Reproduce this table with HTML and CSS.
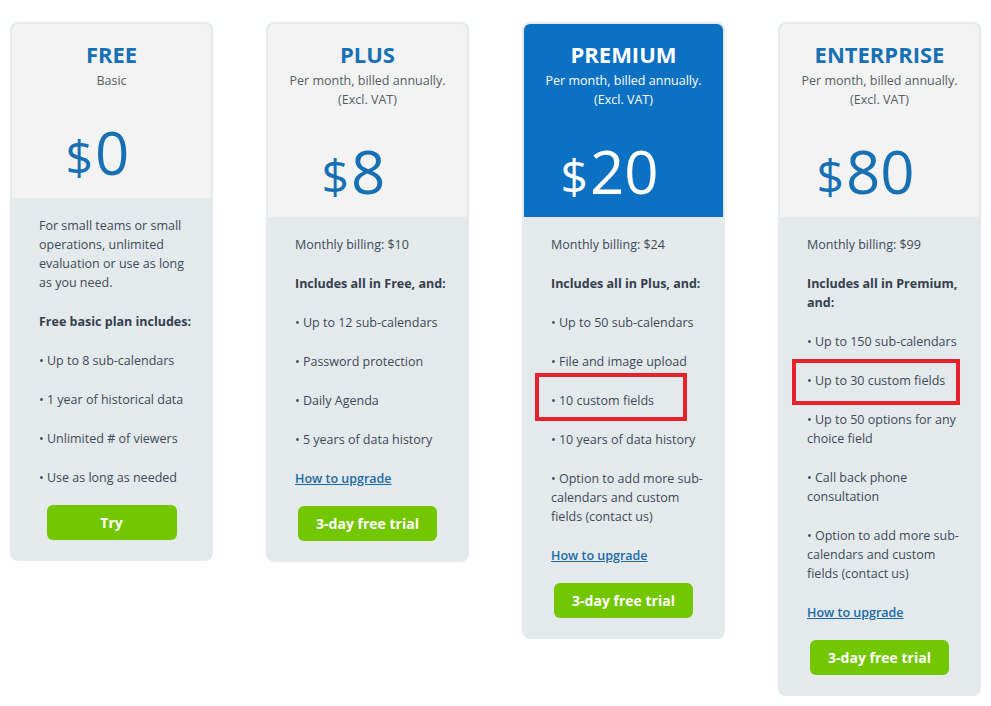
FILE: index.html
```html
<!DOCTYPE html>
<html>
<head>
<meta charset="utf-8">
<link rel="stylesheet" href="styles.css">
</head>
<body>
<div class="plans">
  <div class="card">
    <div class="head">
      <div class="title">FREE</div>
      <div class="sub">Basic</div>
      <div class="price"><span class="cur">$</span>0</div>
    </div>
    <div class="body">
      <p>For small teams or small operations, unlimited evaluation or use as long as you need.</p>
      <p class="strong">Free basic plan includes:</p>
      <ul>
        <li>• Up to 8 sub-calendars</li>
        <li>• 1 year of historical data</li>
        <li>• Unlimited # of viewers</li>
        <li>• Use as long as needed</li>
      </ul>
      <div class="btn-row"><a class="btn">Try</a></div>
    </div>
  </div>

  <div class="card">
    <div class="head">
      <div class="title">PLUS</div>
      <div class="sub">Per month, billed annually.<br>(Excl. VAT)</div>
      <div class="price"><span class="cur">$</span>8</div>
    </div>
    <div class="body">
      <p>Monthly billing: $10</p>
      <p class="strong">Includes all in Free, and:</p>
      <ul>
        <li>• Up to 12 sub-calendars</li>
        <li>• Password protection</li>
        <li>• Daily Agenda</li>
        <li>• 5 years of data history</li>
      </ul>
      <p><a class="link">How to upgrade</a></p>
      <div class="btn-row"><a class="btn">3-day free trial</a></div>
    </div>
  </div>

  <div class="card premium">
    <div class="head">
      <div class="title">PREMIUM</div>
      <div class="sub">Per month, billed annually.<br>(Excl. VAT)</div>
      <div class="price"><span class="cur">$</span>20</div>
    </div>
    <div class="body">
      <p>Monthly billing: $24</p>
      <p class="strong">Includes all in Plus, and:</p>
      <ul>
        <li>• Up to 50 sub-calendars</li>
        <li>• File and image upload</li>
        <li class="marked mark-a">• 10 custom fields</li>
        <li>• 10 years of data history</li>
        <li>• Option to add more sub-calendars and custom fields (contact us)</li>
      </ul>
      <p><a class="link">How to upgrade</a></p>
      <div class="btn-row"><a class="btn">3-day free trial</a></div>
    </div>
  </div>

  <div class="card">
    <div class="head">
      <div class="title">ENTERPRISE</div>
      <div class="sub">Per month, billed annually.<br>(Excl. VAT)</div>
      <div class="price"><span class="cur">$</span>80</div>
    </div>
    <div class="body">
      <p>Monthly billing: $99</p>
      <p class="strong">Includes all in Premium, and:</p>
      <ul>
        <li>• Up to 150 sub-calendars</li>
        <li class="marked mark-b">• Up to 30 custom fields</li>
        <li>• Up to 50 options for any choice field</li>
        <li>• Call back phone consultation</li>
        <li>• Option to add more sub-calendars and custom fields (contact us)</li>
      </ul>
      <p><a class="link">How to upgrade</a></p>
      <div class="btn-row"><a class="btn">3-day free trial</a></div>
    </div>
  </div>
</div>
</body>
</html>
```

FILE: styles.css
```css
* { box-sizing: border-box; }
html, body { margin: 0; padding: 0; background: #ffffff; }
body {
  font-family: "Open Sans", "Liberation Sans", sans-serif;
  font-size: 12.5px;
  line-height: 19px;
  color: #3e4a57;
}
.plans {
  display: flex;
  align-items: flex-start;
  gap: 53px;
  padding: 22px 0 0 10px;
}
.card {
  width: 203px;
  background: #e4e9ec;
  border-radius: 8px;
  padding: 2px 2px 0 2px;
}
.head {
  background: #f3f3f3;
  border-radius: 6px 6px 0 0;
  text-align: center;
  padding: 15px 6px 9px;
}
.title {
  font-size: 22px;
  font-weight: 700;
  line-height: 30px;
  color: #1670b3;
  margin-bottom: 2px;
}
.sub {
  color: #555c63;
  line-height: 19px;
}
.price {
  margin-top: 30px;
  font-size: 60px;
  font-weight: 500;
  line-height: 64px;
  color: #1670b3;
  padding-right: 28px;
}
.cur {
  font-size: 48px;
  font-weight: 400;
  margin-right: 2px;
}
.premium .head { background: #0c70c3; }
.premium .title, .premium .sub, .premium .price { color: #ffffff; }
.body {
  padding: 18px 19px 21px 27px;
}
.body p { margin: 0 0 20px; }
.body .strong { font-weight: 700; color: #34404d; }
.body ul { list-style: none; margin: 0; padding: 0; }
.body li { margin: 0 0 20px; }
.link {
  color: #1b69a5;
  font-weight: 600;
  text-decoration: underline;
}
.btn-row {
  display: flex;
  justify-content: center;
  padding-right: 8px;
  margin-top: -2px;
}
.btn {
  display: flex;
  align-items: center;
  justify-content: center;
  min-width: 130px;
  height: 35px;
  padding: 0 18px;
  background: #72c700;
  color: #ffffff;
  font-weight: 700;
  font-size: 14px;
  border-radius: 6px;
}
.marked { position: relative; }
.marked::after {
  content: "";
  position: absolute;
  box-sizing: border-box;
  border: 4px solid #e8212b;
}
.mark-a::after { left: -16px; top: -18px; width: 152px; height: 48px; }
.mark-b::after { left: -15px; top: -12px; width: 168px; height: 46px; }
```
